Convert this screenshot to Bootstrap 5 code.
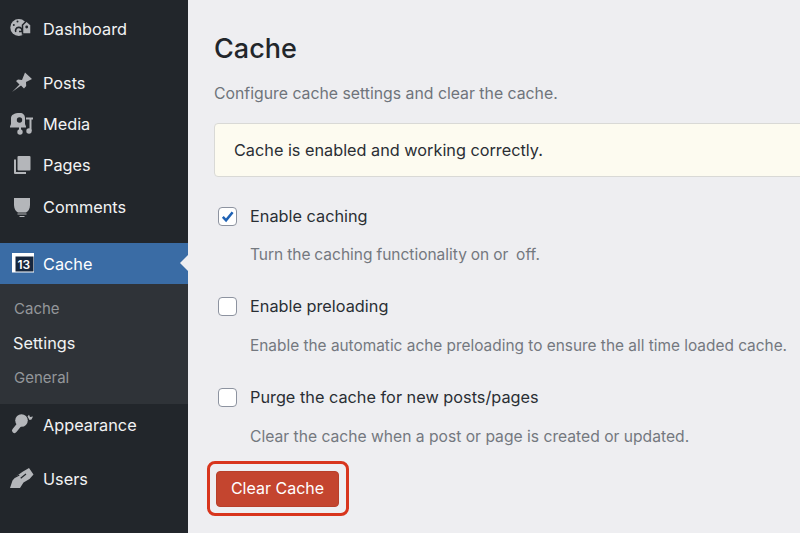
<!DOCTYPE html>
<html lang="en">
<head>
<meta charset="utf-8">
<title>Cache</title>
<link href="https://cdn.jsdelivr.net/npm/bootstrap@5.3.0/dist/css/bootstrap.min.css" rel="stylesheet">
<style>
html,body{height:533px;overflow:hidden}
body{font-family:Inter,"Liberation Sans",sans-serif;background:#eeeef1;color:#2a2e34}
.shell{height:533px;overflow:hidden}
.side{width:188px;flex:none;background:#22262b;height:533px;overflow:hidden}
.mitem{display:flex;align-items:center;color:#f2f3f4;font-size:16.3px;height:41.2px;padding-left:10px;text-decoration:none}
.mitem svg{width:24px;height:24px;flex:none;margin-right:9px;fill:#b4b6ba}
.mitem .cut{fill:#22262b}
.mitem .cutline{fill:none;stroke:#22262b;stroke-width:1.600}
.first{height:41px;margin-top:8.5px;margin-bottom:13px}
.mlow{padding-top:2px}
.mcurrent{background:#3a6ca5;color:#fff;height:41px;margin-top:15.5px;position:relative}
.mcurrent .lbl{padding-top:2px}
.mcurrent::after{content:"";position:absolute;right:0;top:12px;border:8.5px solid transparent;border-left:0;border-right-color:#eeeef1}
.ico13{font:600 12px Inter,"Liberation Sans",sans-serif;fill:#fff}
.subm{background:#2f3338;height:120px;padding-top:8px}
.sitem{display:block;color:#94979b;font-size:15px;line-height:34.5px;padding-left:14px;text-decoration:none}
.sitem.on{color:#f2f3f4;font-size:16.3px;padding-left:13px}
.after1{margin-top:.5px}
.after2{margin-top:13px}
.pane{padding:0 0 0 26px;min-width:0;flex:1;overflow:hidden}
.ttl{font-size:27px;font-weight:500;line-height:32px;margin:33px 0 0;color:#22262b}
.desc{font-size:15.8px;line-height:20px;margin:19px 0 0;color:#6f747b}
.notice{background:#fdfbf0;border:1px solid #d9d9d6;border-radius:4px;height:54px;margin:19px -40px 0 0;padding-left:19px;font-size:16.25px;display:flex;align-items:center;color:#2a2e34}
.optgroup{margin-top:29px}
.optgroup.top{margin-top:27px}
.optrow{display:flex;align-items:center;height:24px;font-size:16.3px;font-weight:400;color:#2a2e34;margin:0}
.optrow .form-check-input{width:19px;height:19px;margin:0 13px 0 4px;flex:none;border:1.5px solid #8d93a0;border-radius:4px;background-color:#fff}
.optrow .form-check-input:checked{background-color:#fff;border-color:#8d93a0;background-image:url("data:image/svg+xml,%3Csvg xmlns='http://www.w3.org/2000/svg' viewBox='0 0 20 20'%3E%3Cpath fill='none' stroke='%231f62b5' stroke-width='3' d='M4.500 10.500l3.800 4L16 5'/%3E%3C/svg%3E")}
.hint{font-size:15.5px;line-height:20px;color:#74787f;margin:18px 0 0 36px;white-space:nowrap}
.hint.hint-a{margin-top:17px;word-spacing:-.45px}
.hint.hint-b{font-size:15.4px}
.hint.hint-c{font-size:15.65px}
.ring{display:inline-block;border:3.5px solid #d8351d;border-radius:8px;padding:7px 7px 6px 6px;margin:14px 0 0 -7px;line-height:0}
.clear{background:#c4452f;border:1px solid #b83f2a;color:#fff;font-size:16px;line-height:20px;padding:6px 0 8px;border-radius:4px;width:123px;height:36px}
.clear:hover{background:#c4452f;color:#fff;border-color:#b83f2a}
</style>
</head>
<body>
<div class="shell d-flex">
<nav class="side">
  <a class="mitem first" href="#"><svg viewBox="0 0 24 24"><circle cx="8.800" cy="10.500" r="8.500"/><path class="cutline" d="M5.800 15a3.300 3.300 0 1 1 6.200-.5H9"/><circle class="cut" cx="3.800" cy="8" r="1"/><circle class="cut" cx="7.500" cy="4.500" r="1"/><path d="M16.500 4l4.500 4v9h-8.500V8z" stroke="#22262b" stroke-width="1.500"/><circle class="cut" cx="16.700" cy="10" r="1.400"/></svg>Dashboard</a>
  <a class="mitem" href="#"><svg viewBox="0 0 24 24"><path d="M2 21l7.500-7.500L6 10l2-1.500 4 .5 3-7.500 7 6.500-6 3 .2 4-2.200 2.500-3-3z"/></svg>Posts</a>
  <a class="mitem" href="#"><svg viewBox="0 0 24 24"><path d="M10 1c3 0 5 2 5 5v6l1 2.500v1H0v-1L1 12V6c0-3 3-5 9-5z"/><path d="M9 15h2v4H9z"/><circle cx="10" cy="20" r="2.700"/><circle class="cut" cx="9.500" cy="8" r="2.700"/><path d="M16 5.500h7v2h-1.500V19h-2V7.500H16z"/><circle cx="19" cy="19" r="2.700"/></svg>Media</a>
  <a class="mitem" href="#"><svg viewBox="0 0 24 24"><path d="M4 6.500h2V19h10v2H5a1 1 0 0 1-1-1z"/><rect x="7.500" y="3" width="13" height="14.500" rx="1"/></svg>Pages</a>
  <a class="mitem mlow" href="#"><svg viewBox="0 0 24 24"><path d="M4 2h16v7c0 4-2 6.500-4 7.500H8C6 15.500 4 13 4 9z"/><path d="M7.500 17.500h9v1h-9zM9.500 20h5v1h-5z"/></svg>Comments</a>
  <a class="mitem mcurrent" href="#"><svg viewBox="0 0 24 24"><path fill="#fff" d="M2 2h22v19.500H2z"/><path fill="#16263c" d="M5.500 5.500h18v15h-18z"/><text class="ico13" x="7.500" y="17.500">13</text></svg><span class="lbl">Cache</span></a>
  <div class="subm">
    <a class="sitem" href="#">Cache</a>
    <a class="sitem on" href="#">Settings</a>
    <a class="sitem" href="#">General</a>
  </div>
  <a class="mitem after1" href="#"><svg viewBox="0 0 24 24"><circle cx="11.500" cy="7.500" r="6.300"/><path d="M9 12L4.500 17.500" stroke="#b4b6ba" stroke-width="5" stroke-linecap="round"/><path d="M17.500 3.500l1.500-1.800 1 2.200 3-.3-1.500 3-2 .3z"/></svg>Appearance</a>
  <a class="mitem after2" href="#"><svg viewBox="0 0 24 24"><path d="M19 1l4.500 6.500-4 4.500-6 3.500-3.500 5.500H0l2.500-7.500 4-4.500 6.500-4.500z"/><path d="M5 10.300L9.300 8M10.700 11.300L16 7" stroke="#22262b" stroke-width="1.200" fill="none"/></svg>Users</a>
</nav>
<main class="pane">
  <h1 class="ttl">Cache</h1>
  <p class="desc">Configure cache settings and clear the cache.</p>
  <div class="notice">Cache is enabled and working correctly.</div>
  <div class="form-check p-0 mb-0 optgroup top">
    <label class="optrow"><input class="form-check-input" type="checkbox" checked>Enable caching</label>
    <p class="hint hint-a">Turn the caching functionality on or&nbsp; off.</p>
  </div>
  <div class="form-check p-0 mb-0 optgroup">
    <label class="optrow"><input class="form-check-input" type="checkbox">Enable preloading</label>
    <p class="hint hint-b">Enable the automatic ache preloading to ensure the all time loaded cache.</p>
  </div>
  <div class="form-check p-0 mb-0 optgroup">
    <label class="optrow"><input class="form-check-input" type="checkbox">Purge the cache for new posts/pages</label>
    <p class="hint hint-c">Clear the cache when a post or page is created or updated.</p>
  </div>
  <span class="ring"><button class="btn clear" type="button">Clear Cache</button></span>
</main>
</div>
<script src="https://cdn.jsdelivr.net/npm/bootstrap@5.3.0/dist/js/bootstrap.bundle.min.js"></script>
</body>
</html>
